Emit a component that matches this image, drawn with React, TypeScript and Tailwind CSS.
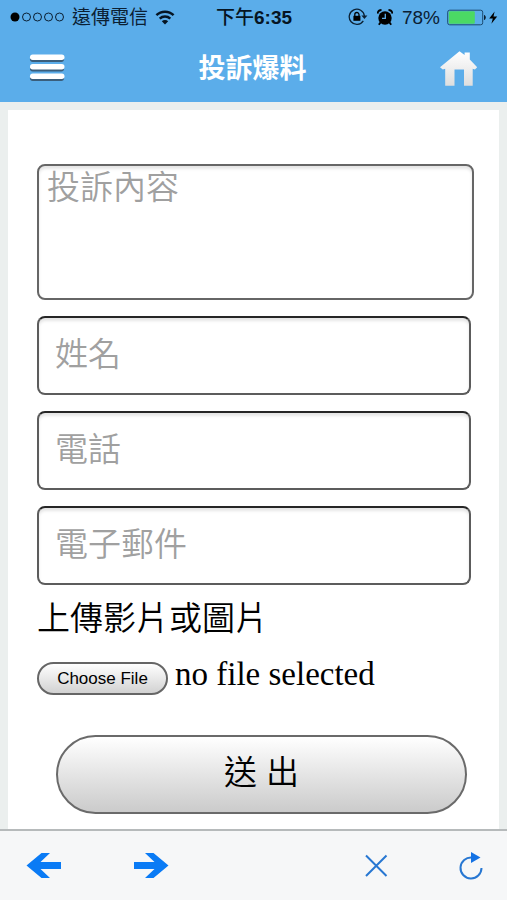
import React, { ReactNode, useRef, useState } from "react";

interface TextFieldProps {
  name: string;
  label: string;
  type?: string;
}

const cjk = "font-['Liberation_Sans','Noto_Sans_CJK_TC',sans-serif]";

function TextField({ name, label, type = "text" }: TextFieldProps) {
  return (
    <input
      type={type}
      name={name}
      aria-label={label}
      placeholder={label}
      className="mr-[3px] h-[79px] rounded-lg border-2 border-[#5c5c5c] border-t-[#262626] bg-white px-4 pb-[2px] text-[33px] font-[350] text-black shadow-[inset_0_3px_3px_#e6e6e6] outline-none placeholder:text-[#a0a0a0]"
    />
  );
}

function StatusBar() {
  return (
    <div className="grid h-[34px] grid-cols-[1fr_auto_1fr] items-center pl-[10px] pr-[9px] text-[#0b2033]">
      <div className="flex items-center gap-[7px]">
        <svg width="55" height="12" viewBox="0 0 55 12" fill="none" stroke="currentColor">
          <circle cx="5" cy="6" r="4.5" fill="#000" stroke="none" />
          <circle cx="16.5" cy="6" r="4" />
          <circle cx="27.5" cy="6" r="4" />
          <circle cx="38.5" cy="6" r="4" />
          <circle cx="49.5" cy="6" r="4" />
        </svg>
        <span className="whitespace-nowrap text-[19px] leading-none">遠傳電信</span>
        <svg width="20" height="16" viewBox="0 0 20 16" fill="none" stroke="#061523" strokeWidth="2.4">
          <path d="M1.4 6.2a12.3 12.3 0 0 1 17.2 0" />
          <path d="M4.7 9.6a7.6 7.6 0 0 1 10.6 0" />
          <path d="M10 15.4 6.8 12.2a4.6 4.6 0 0 1 6.4 0z" fill="#061523" stroke="none" />
        </svg>
      </div>
      <span className="whitespace-nowrap text-[19px] font-medium leading-none text-[#061523]">
        下午<span className="font-bold">6:35</span>
      </span>
      <div className="flex items-center justify-end">
        <svg className="mr-[9px]" width="20" height="18" viewBox="0 0 20 18" fill="none" stroke="currentColor" strokeWidth="1.3">
          <path d="M15.3 12.8A7.6 7.6 0 1 1 16.4 8" />
          <path d="M13.4 7.6h6L16.4 11z" fill="currentColor" stroke="none" />
          <path d="M5.4 7.8h7v5h-7z" fill="#000" stroke="none" />
          <path d="M6.8 8V6.6a2.1 2.1 0 0 1 4.2 0V8" stroke="#000" />
        </svg>
        <svg className="mr-[9px]" width="16" height="17" viewBox="0 0 16 17">
          <circle cx="8" cy="9" r="6.7" />
          <path d="M.6 4.6A4 4 0 0 1 4.5 1M15.4 4.6A4 4 0 0 0 11.5 1" fill="none" stroke="#000" strokeWidth="1.8" />
          <path d="m3.6 13.4-1.8 2.4M12.4 13.4l1.8 2.4" stroke="#000" strokeWidth="1.8" />
          <path d="M8.3 4.8v4.6H5" fill="none" stroke="#5badea" strokeWidth="1.3" />
        </svg>
        <span className="mr-[7px] text-[19px] leading-none">78%</span>
        <svg width="51" height="17" viewBox="0 0 51 17">
          <rect x=".7" y="1.2" width="35" height="14.6" rx="2" fill="none" stroke="#1d4a70" />
          <rect x="1.8" y="2.3" width="26" height="12.4" rx="1" fill="#4bd964" />
          <path d="M37 6v5c2.4-.6 2.4-4.4 0-5z" fill="#0b2033" />
          <path d="m47.6 2.6-5.4 7h3.6l-1.4 5.2 5.8-7.2h-3.7z" fill="#000" />
        </svg>
      </div>
    </div>
  );
}

function Header() {
  return (
    <header className="bg-[#5badea]">
      <StatusBar />
      <div className="flex h-[68px] items-center justify-between px-7">
        <button type="button" aria-label="選單">
          <svg width="38" height="30" viewBox="0 0 38 30">
            <g fill="#3a5e7c">
              <rect x="2" y="3.5" width="34" height="5.5" rx="2.7" />
              <rect x="2" y="13" width="34" height="5.5" rx="2.7" />
              <rect x="2" y="22.5" width="34" height="5.5" rx="2.7" />
            </g>
            <g fill="#fff">
              <rect x="2" y="1.5" width="34.5" height="5.5" rx="2.7" />
              <rect x="2" y="11" width="34.5" height="5.5" rx="2.7" />
              <rect x="2" y="20.5" width="34.5" height="5.5" rx="2.7" />
            </g>
          </svg>
        </button>
        <h1 className="pt-[2px] text-[27px] font-bold leading-none text-white">投訴爆料</h1>
        <a href="#home" aria-label="首頁">
          <svg width="40" height="36" viewBox="0 0 40 36">
            <defs>
              <linearGradient id="house" x1="0" y1="0" x2="0" y2="1">
                <stop offset="0" stopColor="#fff" />
                <stop offset="1" stopColor="#dedede" />
              </linearGradient>
            </defs>
            <path
              d="M20.5 1.2 25.6 5V2.6h5.2v6.8l7.4 7.8-2.3 2.3-2.2-.8v17H25V19.5h-9.500v16.200H6.200v-17l-2.400.8L1 17.200z"
              fill="url(#house)"
            />
          </svg>
        </a>
      </div>
    </header>
  );
}

function ToolButton({ label, children }: { label: string; children: ReactNode }) {
  return (
    <button type="button" aria-label={label} className="shrink-0 text-[#0a7bf5]">
      {children}
    </button>
  );
}

function Toolbar() {
  return (
    <footer className="flex h-[71px] items-center justify-between border-t-2 border-[#b6babb] bg-[#f6f7f8] pl-[26px] pr-[23px]">
      <div className="flex gap-[71px]">
        <ToolButton label="上一頁">
          <svg width="36" height="28" viewBox="0 0 36 28" fill="currentColor">
            <path d="M.5 13.500 15.500 1H24l-9.500 9H35v7H14.500l9.500 9h-8.500z" />
          </svg>
        </ToolButton>
        <ToolButton label="下一頁">
          <svg width="36" height="28" viewBox="0 0 36 28" fill="currentColor">
            <path d="M35.500 13.500 20.500 1H12l9.500 9H1v7h20.500L12 26h8.500z" />
          </svg>
        </ToolButton>
      </div>
      <div className="flex gap-[70px]">
        <ToolButton label="停止">
          <svg width="24" height="28" viewBox="0 0 24 28" fill="none" stroke="#2777d2" strokeWidth="2">
            <path d="m2 3.500 20.500 20.500M22.500 3.500 2 24" />
          </svg>
        </ToolButton>
        <ToolButton label="重新整理">
          <svg width="26" height="30" viewBox="0 0 26 30">
            <path d="M14 6.500A10.500 10.500 0 1 0 23.500 17" fill="none" stroke="#2777d2" strokeWidth="2" />
            <path d="M13 1v11l9.500-5.500z" fill="#1472e4" />
          </svg>
        </ToolButton>
      </div>
    </footer>
  );
}

export default function App() {
  const fileRef = useRef<HTMLInputElement>(null);
  const [fileName, setFileName] = useState("");

  return (
    <div className={`flex min-h-screen flex-col bg-[#ebefee] ${cjk}`}>
      <Header />
      <main className="flex flex-1 flex-col px-2 pt-2">
        <form className="flex flex-1 flex-col bg-white pb-[14px] pl-[29px] pr-[25px] pt-[54px]" onSubmit={(e) => e.preventDefault()}>
          <div className="flex flex-col gap-4">
            <textarea
              name="content"
              aria-label="投訴內容"
              placeholder="投訴內容"
              className="h-[136px] resize-none rounded-lg border-2 border-[#666] bg-white px-2 text-[33px] font-[350] leading-[44px] text-black shadow-[inset_0_3px_3px_#e6e6e6] outline-none placeholder:text-[#a0a0a0]"
            />
            <TextField name="name" label="姓名" />
            <TextField name="phone" label="電話" type="tel" />
            <TextField name="email" label="電子郵件" type="email" />
          </div>

          {/* Upload */}
          <label htmlFor="upload" className="mt-3 text-[33px] font-[350] leading-[44px] text-black">
            上傳影片或圖片
          </label>
          <input
            ref={fileRef}
            id="upload"
            type="file"
            accept="image/*,video/*"
            className="hidden"
            onChange={(e) => setFileName(e.target.files?.[0]?.name ?? "")}
          />
          <div className="mt-4 flex items-center gap-[7px]">
            <button
              type="button"
              onClick={() => fileRef.current?.click()}
              className="h-[33px] w-[131px] shrink-0 rounded-full border-2 border-[#666] bg-linear-to-b from-white to-[#d2d2d2] text-[17px] leading-none text-black"
            >
              Choose File
            </button>
            <span className="truncate pb-2 font-['Liberation_Serif',serif] text-[33px] leading-[34px] text-black">
              {fileName || "no file selected"}
            </span>
          </div>

          <button
            type="submit"
            className="ml-[19px] mr-[7px] mt-9 h-[79px] rounded-full border-2 border-[#6a6a6a] bg-linear-to-b from-white to-[#cbcbcb] pb-1 text-[33px] font-[350] text-black"
          >
            送 出
          </button>
        </form>
      </main>
      <Toolbar />
    </div>
  );
}
